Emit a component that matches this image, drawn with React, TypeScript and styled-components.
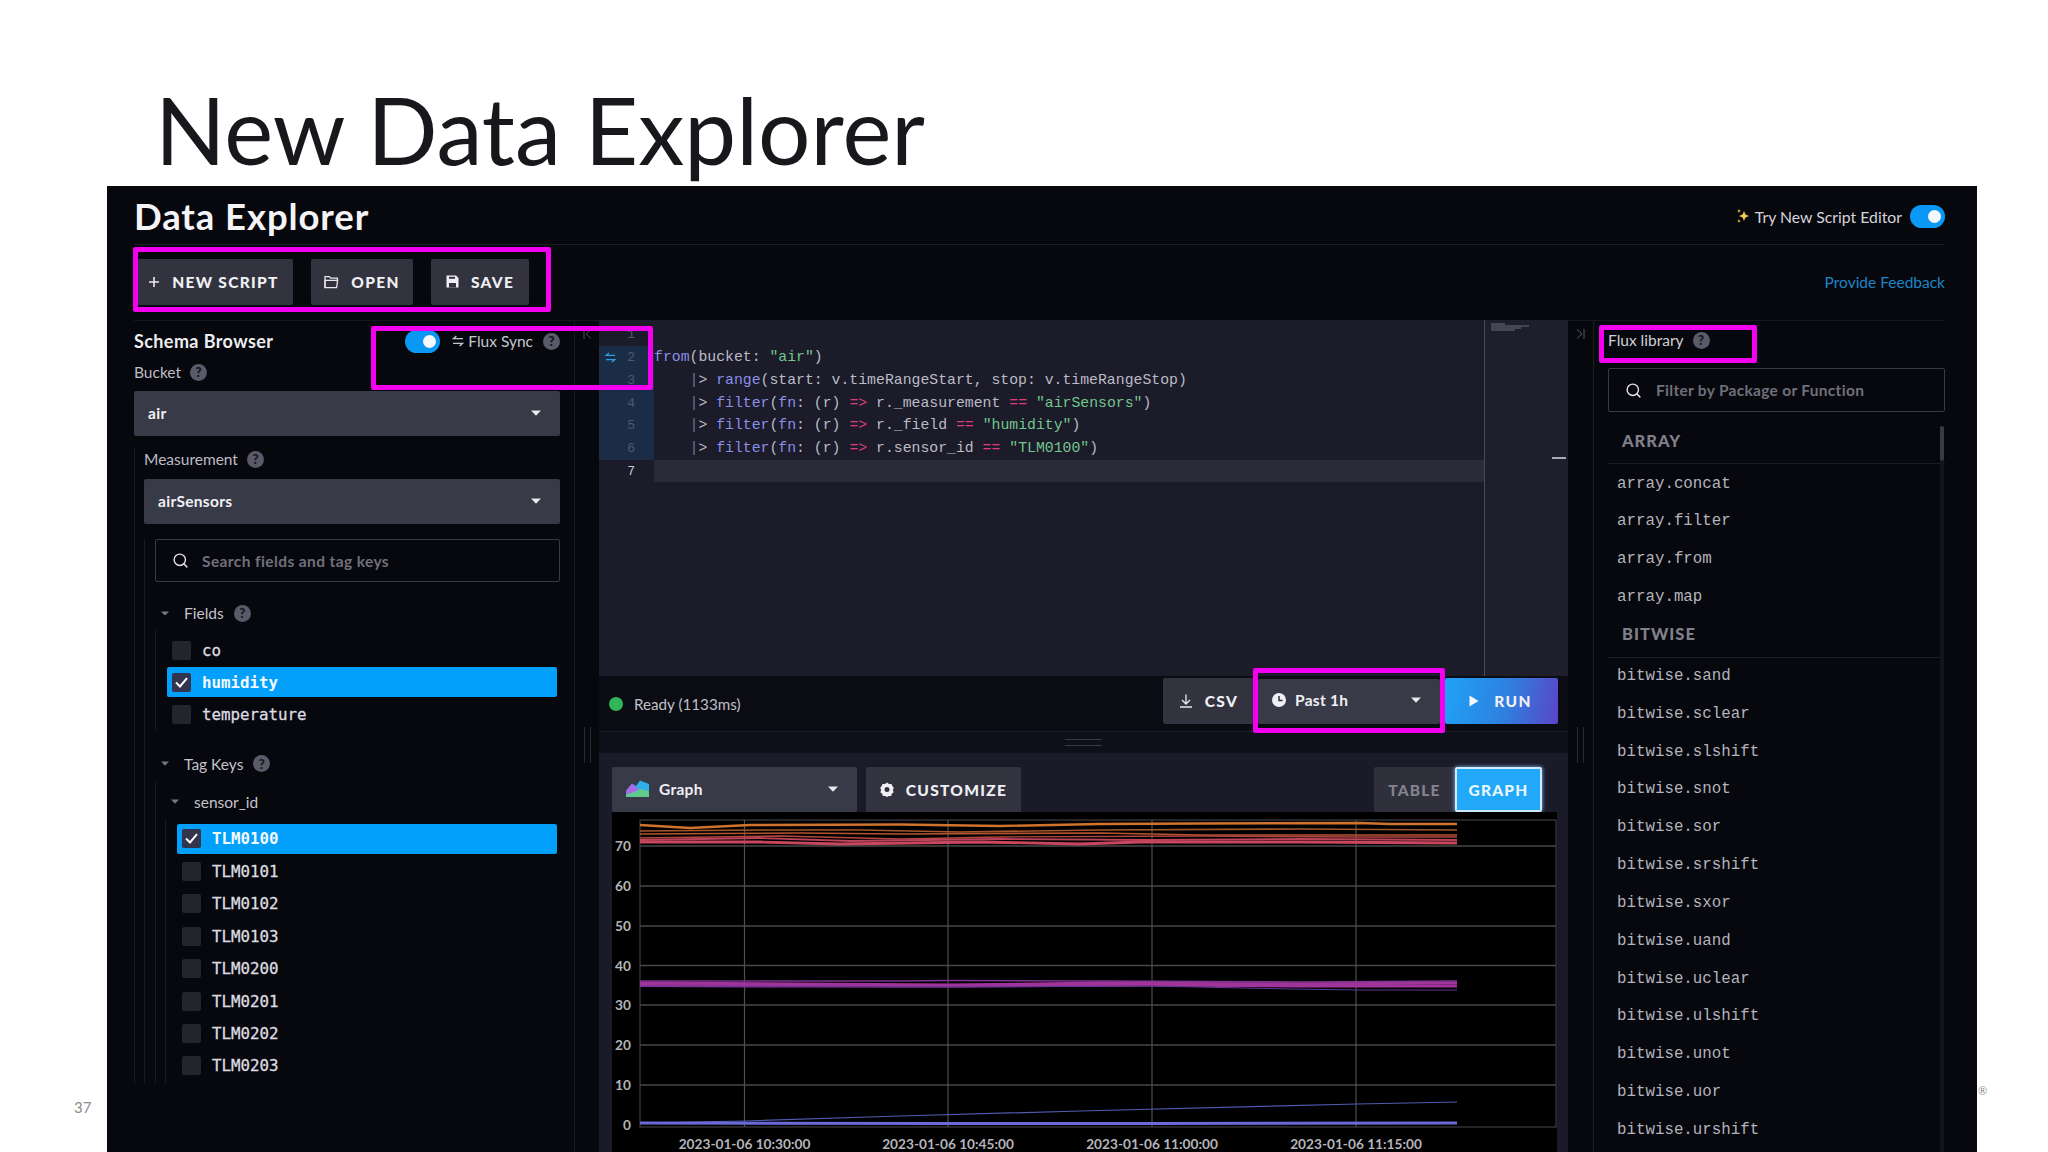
import styled, { createGlobalStyle } from "styled-components"
import { Search } from "lucide-react"

const GlobalStyle = createGlobalStyle`
  html, body {
    margin: 0;
    background: #fff;
  }
  * {
    box-sizing: border-box;
  }
`

const UI = `Lato, "Open Sans", sans-serif`
const MONO = `"Liberation Mono", monospace`
const TREE_MONO = `"DejaVu Sans Mono", monospace`

const Page = styled.div`
  width: 2048px;
  height: 1152px;
  overflow: hidden;
  background: #fff;
  font-family: ${UI};
  display: flex;
  flex-direction: column;
`

const SlideTitle = styled.h1`
  margin: 0;
  height: 186px;
  padding: 72px 0 0 155px;
  font-size: 92.6px;
  line-height: 116px;
  font-weight: 400;
  color: #17171c;
  white-space: nowrap;
`

const SlideBody = styled.div`
  flex: 1;
  display: flex;
  min-height: 0;
`

const SideMargin = styled.div<{ $w: number; $pad: number; $bottom: number; $size: number }>`
  width: ${(p) => p.$w}px;
  display: flex;
  align-items: flex-end;
  padding: 0 0 ${(p) => p.$bottom}px ${(p) => p.$pad}px;
  color: #8b8b8b;
  font-size: ${(p) => p.$size}px;
`

const App = styled.div`
  position: relative;
  width: 1870px;
  background: #07070e;
  padding: 0 32px 0 27px;
  display: flex;
  flex-direction: column;
  overflow: hidden;
`

const Highlight = styled.div<{ $x: number; $y: number; $r: number; $b: number }>`
  position: absolute;
  left: ${(p) => p.$x - 107}px;
  top: ${(p) => p.$y - 186}px;
  width: ${(p) => p.$r - p.$x}px;
  height: ${(p) => p.$b - p.$y}px;
  border: 5px solid #f400f0;
  border-radius: 2px;
  z-index: 3;
`

const Header = styled.header`
  height: 59px;
  flex: none;
  display: flex;
  align-items: center;
  justify-content: space-between;
  padding-top: 2px;
  border-bottom: 1px solid #1c1c24;
`

const AppTitle = styled.div`
  color: #f4f4f6;
  font-size: 36.5px;
  font-weight: 700;
  letter-spacing: 0.9px;
`

const TrySwitch = styled.div`
  display: flex;
  align-items: center;
  gap: 8px;
  color: #d4d4da;
  font-size: 15.8px;
`

const SparkleSlot = styled.span`
  display: flex;
  margin-right: -3px;
`

const Toggle = styled.span`
  position: relative;
  width: 35px;
  height: 23px;
  border-radius: 12px;
  background: #0b98f5;
  &::after {
    content: "";
    position: absolute;
    right: 4px;
    top: 5px;
    width: 13px;
    height: 13px;
    border-radius: 50%;
    background: #f4f7fb;
  }
`

const Toolbar = styled.div`
  height: 76px;
  flex: none;
  display: flex;
  align-items: flex-start;
  justify-content: space-between;
  padding-top: 14px;
  border-bottom: 1px solid #16161e;
`

const ToolGroup = styled.div`
  display: flex;
  gap: 18px;
`

const ActionButton = styled.button<{ $w: number }>`
  width: ${(p) => p.$w}px;
  height: 46px;
  border: none;
  border-radius: 2px;
  background: #32333f;
  color: #f0f0f4;
  font-family: ${UI};
  font-size: 15.5px;
  font-weight: 900;
  letter-spacing: 1.3px;
  text-transform: uppercase;
  display: flex;
  align-items: center;
  justify-content: center;
  gap: 12px;
  padding-bottom: 2px;
  white-space: nowrap;
`

const Feedback = styled.a`
  color: #1d86c6;
  font-size: 15.5px;
  padding-top: 14px;
`

const Main = styled.div`
  flex: 1;
  min-height: 0;
  display: grid;
  grid-template-columns: 441px 24px 969px 25px 352px;
`

const LeftPanel = styled.aside`
  border-right: 1px solid #191921;
  padding: 7px 14px 0 0;
`

const PanelHead = styled.div`
  height: 26px;
  display: flex;
  align-items: center;
  justify-content: space-between;
`

const PanelTitle = styled.div`
  color: #ecedf0;
  font-size: 18px;
  font-weight: 700;
  letter-spacing: 0.4px;
`

const FluxSync = styled.div`
  display: flex;
  align-items: center;
  gap: 10px;
  color: #c6c6cd;
  font-size: 15.5px;
`

const SyncLabel = styled.span`
  display: flex;
  align-items: center;
  gap: 4px;
  margin-left: 2px;
`

const FieldLabel = styled.div<{ $above?: number; $below: number }>`
  height: 24px;
  margin: ${(p) => p.$above ?? 0}px 0 ${(p) => p.$below}px;
  display: flex;
  align-items: center;
  gap: 9px;
  color: #bdbdc5;
  font-size: 15.5px;
`

const Help = styled.span`
  width: 17px;
  height: 17px;
  border-radius: 50%;
  background: #5a5a68;
  color: #15151c;
  font-size: 13px;
  font-weight: 900;
  display: inline-flex;
  align-items: center;
  justify-content: center;
  flex: none;
`

const Select = styled.div<{ $w?: number }>`
  height: 45px;
  width: ${(p) => (p.$w ? `${p.$w}px` : "auto")};
  flex: none;
  background: #393a47;
  border-radius: 2px;
  padding: 0 19px 2px 14px;
  color: #f0f0f4;
  font-size: 15.5px;
  font-weight: 700;
  letter-spacing: 0.3px;
  display: flex;
  align-items: center;
  justify-content: space-between;
`

const SelectLead = styled.span`
  display: flex;
  align-items: center;
  gap: 9px;
`

const Nest = styled.div<{ $pad: number; $above: number; $top?: number; $bottom?: number }>`
  border-left: 1px solid #191920;
  margin-top: ${(p) => p.$above}px;
  padding: ${(p) => p.$top ?? 0}px 0 ${(p) => p.$bottom ?? 0}px ${(p) => p.$pad}px;
`

const SearchBox = styled.div`
  height: 43px;
  border: 1px solid #3a3a44;
  border-radius: 2px;
  display: flex;
  align-items: center;
  gap: 13px;
  padding: 0 16px;
  color: #70707b;
  font-size: 15.5px;
  font-weight: 700;
  letter-spacing: 0.4px;
  svg {
    color: #e6e6ea;
    flex: none;
  }
`

const TreeHead = styled.div<{ $above?: number }>`
  height: 24px;
  margin-top: ${(p) => p.$above ?? 0}px;
  display: flex;
  align-items: center;
  color: #c4c4cb;
  font-size: 15.5px;
  gap: 10px;
`

const CaretSlot = styled.span`
  width: 20px;
  display: flex;
  justify-content: center;
  margin-right: -1px;
`

const Rows = styled.div`
  display: flex;
  flex-direction: column;
  gap: 2.45px;
  margin-right: 3px;
`

const TreeRow = styled.div<{ $on?: boolean }>`
  height: 30px;
  display: flex;
  align-items: center;
  gap: 11px;
  padding-left: 5px;
  border-radius: 2px;
  background: ${(p) => (p.$on ? "#03a0fb" : "transparent")};
  color: ${(p) => (p.$on ? "#f2f9ff" : "#dcdce0")};
  font-family: ${TREE_MONO};
  font-size: 15.8px;
  font-weight: ${(p) => (p.$on ? 700 : 400)};
  -webkit-text-stroke: ${(p) => (p.$on ? "0" : "0.3px")};
`

const Check = styled.span<{ $on?: boolean }>`
  width: 19px;
  height: 19px;
  border-radius: 2px;
  background: ${(p) => (p.$on ? "#33344e" : "#24242d")};
  display: flex;
  align-items: center;
  justify-content: center;
`

const HandleColumn = styled.div<{ $top: number }>`
  display: flex;
  flex-direction: column;
  align-items: center;
  padding-top: ${(p) => p.$top}px;
`

const CollapseIcon = styled.span<{ $mb: number }>`
  height: 14px;
  margin-bottom: ${(p) => p.$mb}px;
  display: flex;
`

const HandleBars = styled.span`
  width: 7px;
  height: 36px;
  border-left: 1px solid #2a2a34;
  border-right: 1px solid #2a2a34;
`

const Middle = styled.section`
  display: flex;
  flex-direction: column;
  min-width: 0;
  margin-top: -1px;
`

const Editor = styled.div`
  height: 356px;
  flex: none;
  display: flex;
  background: #1b1b2a;
  padding-top: 3.6px;
  position: relative;
`

const Gutter = styled.div`
  width: 55px;
  flex: none;
  display: flex;
  flex-direction: column;
`

const GutterLine = styled.div<{ $changed?: boolean; $current?: boolean }>`
  height: 22.7px;
  display: flex;
  align-items: center;
  justify-content: flex-end;
  gap: 11px;
  padding-right: 19px;
  font-family: ${MONO};
  font-size: 13px;
  background: ${(p) => (p.$changed ? "#1a2c46" : "transparent")};
  color: ${(p) => (p.$current ? "#c8c8d0" : "#4c5a70")};
`

const Code = styled.div`
  flex: 1;
  display: flex;
  flex-direction: column;
  min-width: 0;
`

const CodeLine = styled.div<{ $pipe?: boolean; $current?: boolean }>`
  height: 22.7px;
  line-height: 22.7px;
  padding-left: ${(p) => (p.$pipe ? 35.5 : 0)}px;
  font-family: ${MONO};
  font-size: 14.8px;
  white-space: pre;
  color: #bcbcc6;
  background: ${(p) => (p.$current ? "#2a2a38" : "transparent")};
`

const Fn = styled.span`
  color: #8b8fe6;
`

const Str = styled.span`
  color: #72c78d;
`

const Op = styled.span`
  color: #dc3f78;
`

const Pipe = styled.span`
  color: #6f7590;
`

const Minimap = styled.div`
  width: 84px;
  flex: none;
  margin-top: -3.6px;
  background: #1e1e2d;
  border-left: 1px solid #494a58;
  position: relative;
`

const MiniCode = styled.svg`
  display: block;
  margin: 3px 0 0 6px;
`

const ScrollMark = styled.span`
  position: absolute;
  right: 2px;
  top: 137px;
  width: 14px;
  height: 2px;
  background: #a8a8b2;
`

const StatusBar = styled.div`
  height: 56px;
  flex: none;
  display: flex;
  align-items: center;
  justify-content: space-between;
  background: #0b0b14;
  border-bottom: 1px solid #1f1f29;
  padding: 0 10px 0 10px;
`

const Ready = styled.div`
  display: flex;
  align-items: center;
  gap: 11px;
  color: #c0c0c8;
  font-size: 15.2px;
`

const Dot = styled.span`
  width: 14px;
  height: 14px;
  border-radius: 50%;
  background: #30b557;
`

const StatusActions = styled.div`
  display: flex;
  align-items: center;
  gap: 4px;
  margin-top: -5px;
`

const RunButton = styled(ActionButton)`
  background: linear-gradient(100deg, #1ea3f4 0%, #2f7fe0 55%, #5a45c8 100%);
  margin-left: 1px;
  gap: 15px;
  padding-left: 4px;
`

const Strip = styled.div`
  height: 21px;
  flex: none;
  background: #0f0f19;
  display: flex;
  align-items: center;
  justify-content: center;
`

const StripHandle = styled.span`
  width: 37px;
  height: 7px;
  border-top: 1px solid #3a3a45;
  border-bottom: 1px solid #3a3a45;
`

const GraphPanel = styled.div`
  flex: 1;
  min-height: 0;
  background: #1a1a29;
  padding: 14px 11px 0 13px;
  display: flex;
  flex-direction: column;
`

const GraphBar = styled.div`
  height: 45px;
  flex: none;
  display: flex;
  gap: 9px;
  padding-right: 15px;
`

const Spacer = styled.div`
  flex: 1;
`

const Segments = styled.div`
  display: flex;
`

const Segment = styled.div<{ $on?: boolean }>`
  height: 45px;
  display: flex;
  align-items: center;
  justify-content: center;
  width: ${(p) => (p.$on ? 87 : 81)}px;
  font-size: 15.5px;
  font-weight: 900;
  letter-spacing: 1.2px;
  border-radius: 2px;
  background: ${(p) => (p.$on ? "#22a8f8" : "#2f303c")};
  color: ${(p) => (p.$on ? "#e8f6ff" : "#83838e")};
  border: ${(p) => (p.$on ? "2px solid #cfeafd" : "none")};
  box-shadow: ${(p) => (p.$on ? "0 0 4px #7cc8f8" : "none")};
`

const ChartFrame = styled.div`
  flex: 1;
  min-height: 0;
  background: #000;
`

const ChartSvg = styled.svg`
  display: block;
`

const AxisText = styled.text`
  fill: #b4b4ba;
  font-family: ${UI};
  font-size: 13.7px;
  font-weight: 700;
`

const RightPanel = styled.aside`
  border-left: 1px solid #1d1d26;
  padding: 6px 0 0 14px;
  position: relative;
  overflow: hidden;
  &::before {
    content: "";
    position: absolute;
    right: 1px;
    top: 140px;
    bottom: 0;
    width: 4px;
    background: #14141c;
  }
  &::after {
    content: "";
    position: absolute;
    right: 1px;
    top: 105px;
    width: 4px;
    height: 35px;
    border-radius: 2px;
    background: #3a3a46;
  }
`

const LibraryHead = styled.div`
  height: 26px;
  margin-bottom: 15px;
  display: flex;
  align-items: center;
  gap: 9px;
  color: #d0d0d6;
  font-size: 15.5px;
`

const FilterBox = styled(SearchBox)`
  height: 44px;
  gap: 14px;
  letter-spacing: 0.3px;
`

const PackageHead = styled.div<{ $above?: number }>`
  height: 41px;
  margin-top: ${(p) => p.$above ?? 0}px;
  padding: 0 0 5px 14px;
  display: flex;
  align-items: center;
  border-bottom: 1px solid #1c1c25;
  color: #80808a;
  font-size: 16.5px;
  font-weight: 900;
  letter-spacing: 1px;
`

const PackageList = styled.div`
  margin-top: 1.5px;
`

const PackageItem = styled.div`
  height: 37.85px;
  line-height: 37.85px;
  padding-left: 9px;
  color: #b4b4bc;
  font-family: ${MONO};
  font-size: 15.8px;
`

const Caret = ({ size = 10, color = "#e8e8ec" }: { size?: number; color?: string }) => (
  <svg width={size} height={size * 0.6} viewBox="0 0 10 6">
    <path d="M0 0.5h10L5 5.8z" fill={color} />
  </svg>
)

const SyncIcon = ({ color, size = 12 }: { color: string; size?: number }) => (
  <svg width={size} height={size} viewBox="0 0 12 12" fill="none" stroke={color} strokeWidth="1.4">
    <path d="M11 3.6H1.4L4.4 1" />
    <path d="M1 8.4h9.6L7.6 11" />
  </svg>
)

const Checkmark = () => (
  <svg width="13" height="11" viewBox="0 0 13 11" fill="none" stroke="#fff" strokeWidth="2">
    <path d="M1 5.5l4 4L12 1.2" />
  </svg>
)

const Sparkle = () => (
  <svg width="14" height="16" viewBox="0 0 14 16">
    <path d="M8 3l1.4 3.6L13 8l-3.6 1.4L8 13 6.6 9.4 3 8l3.6-1.4z" fill="#f1cf55" />
    <path d="M3 1l.6 1.4L5 3l-1.4.6L3 5l-.6-1.4L1 3l1.4-.6z" fill="#f1cf55" />
    <path d="M3 11l.5 1.5L5 13l-1.5.5L3 15l-.5-1.5L1 13l1.5-.5z" fill="#f1cf55" />
  </svg>
)

const PlusIcon = () => (
  <svg width="12" height="12" viewBox="0 0 12 12" stroke="#e8e8ec" strokeWidth="1.6">
    <path d="M6 1v10M1 6h10" />
  </svg>
)

const FolderIcon = () => (
  <svg width="15" height="14" viewBox="0 0 15 14" fill="none" stroke="#e8e8ec" strokeWidth="1.3">
    <path d="M1 12.6V1.6h4.4l1.4 1.6h6.6v2.2" />
    <path d="M1 12.6h11.6l1-7.2H1z" />
  </svg>
)

const SaveIcon = () => (
  <svg width="13" height="13" viewBox="0 0 13 13">
    <path d="M0.5 0.5h9.5l2.5 2.5v9.5h-12z" fill="#f0f0f4" />
    <rect x="3" y="8" width="7" height="4.5" fill="#32333f" />
    <rect x="3" y="1.8" width="6" height="2" fill="#32333f" />
  </svg>
)

const DownloadIcon = () => (
  <svg width="14" height="14" viewBox="0 0 14 14" fill="none" stroke="#e8e8ec" strokeWidth="1.3">
    <path d="M7 0.5v9M3 6l4 4 4-4M1 13h12" />
  </svg>
)

const ClockIcon = () => (
  <svg width="14" height="14" viewBox="0 0 14 14">
    <circle cx="7" cy="7" r="7" fill="#f0f0f4" />
    <path d="M7 3v4.4h3.6" fill="none" stroke="#32333f" strokeWidth="1.5" />
  </svg>
)

const PlayIcon = () => (
  <svg width="10" height="12" viewBox="0 0 10 12">
    <path d="M0.5 0.5L9.5 6L0.5 11.5z" fill="#f4f8ff" />
  </svg>
)

const GearIcon = () => (
  <svg width="14" height="15" viewBox="0 0 14 15">
    <path
      fillRule="evenodd"
      d="M7 0.5l2 1.6 2.4-.2 1 2.2 1.4 1.9L12.8 8l.9 2.2-1.9 1.5-.6 2.4H8.8L7 14.9l-1.8-.8H2.8l-.6-2.4L.3 10.2 1.2 8 .2 6l1.4-1.9 1-2.2 2.4.2zM7 5a2.5 2.5 0 100 5 2.5 2.5 0 000-5z"
      fill="#f0f0f4"
    />
  </svg>
)

const GraphIcon = () => (
  <svg width="24" height="17" viewBox="0 0 24 17">
    <path d="M0 16V11L6 3.5L10 6L14 .5L23 4V14z" fill="#2fb0e6" />
    <path d="M0 14V11L6 3.5L11 8L15 13z" fill="#a86ae6" />
    <path d="M0 17V14.5L8 12L14 9L23 11V17z" fill="#62c98d" />
  </svg>
)

const CollapseLeft = () => (
  <svg width="9" height="10" viewBox="0 0 9 10" fill="none" stroke="#4a4a55" strokeWidth="1">
    <path d="M1 0v10M8 0.5L3 5l5 4.5" />
  </svg>
)

const CollapseRight = () => (
  <svg width="9" height="10" viewBox="0 0 9 10" fill="none" stroke="#5a5a66" strokeWidth="1">
    <path d="M8 0v10M1 0.5L6 5l-5 4.5" />
  </svg>
)

const HelpMark = () => <Help>?</Help>

const fields = ["co", "humidity", "temperature"]
const sensors = ["TLM0100", "TLM0101", "TLM0102", "TLM0103", "TLM0200", "TLM0201", "TLM0202", "TLM0203"]
const arrayFns = ["array.concat", "array.filter", "array.from", "array.map"]
const bitwiseFns = [
  "bitwise.sand",
  "bitwise.sclear",
  "bitwise.slshift",
  "bitwise.snot",
  "bitwise.sor",
  "bitwise.srshift",
  "bitwise.sxor",
  "bitwise.uand",
  "bitwise.uclear",
  "bitwise.ulshift",
  "bitwise.unot",
  "bitwise.uor",
  "bitwise.urshift",
]

const gridYs = [846, 886, 926, 965.5, 1005, 1045, 1085]
const yLabels = [
  { y: 846, t: "70" },
  { y: 886, t: "60" },
  { y: 926, t: "50" },
  { y: 965.5, t: "40" },
  { y: 1005, t: "30" },
  { y: 1045, t: "20" },
  { y: 1085, t: "10" },
  { y: 1125, t: "0" },
]
const xTicks = [
  { x: 744.5, t: "2023-01-06 10:30:00" },
  { x: 948, t: "2023-01-06 10:45:00" },
  { x: 1152, t: "2023-01-06 11:00:00" },
  { x: 1356, t: "2023-01-06 11:15:00" },
]

const series = [
  { c: "#d0742d", w: 2.4, p: "640,825 690,828 750,825 900,824.5 1000,826 1100,824 1200,823.5 1360,823 1390,824 1457,824" },
  { c: "#a4562b", w: 1.6, p: "640,831 760,830 860,830 960,832 1100,830 1300,829 1457,830" },
  { c: "#b5532f", w: 1.6, p: "640,834 800,833 900,834 1100,833 1200,835 1457,835" },
  { c: "#b24640", w: 1.4, p: "640,838 780,836 900,839 1000,837 1200,836 1360,837 1457,837" },
  { c: "#bb435a", w: 1.8, p: "640,840 760,838 850,841 1000,839 1150,840 1300,839 1457,840" },
  { c: "#c8475f", w: 2.8, p: "640,842 760,842 840,844 980,842 1080,844 1140,842 1300,842 1457,843" },
  { c: "#7a3690", w: 1.6, p: "640,981 900,981 950,980.5 1100,981 1300,982 1457,981" },
  { c: "#a1349a", w: 2.8, p: "640,983 800,984 950,985 1100,983 1300,984 1457,983" },
  { c: "#a1349a", w: 3, p: "640,985.5 760,986 960,986 1150,985 1300,986 1457,986" },
  { c: "#5f3596", w: 1, p: "640,986 950,987 1150,986 1290,989 1360,990 1457,990" },
  { c: "#4f5aae", w: 1.2, p: "640,1123 745,1121 900,1116 1080,1111 1357,1104 1457,1102" },
  { c: "#6a6ad8", w: 3, p: "640,1123 950,1123.5 1150,1123.5 1457,1123" },
]

function Chart() {
  return (
    <ChartSvg width="945" height="340" viewBox="612 812 945 340">
      <rect x="640" y="820" width="916" height="307" fill="none" stroke="#3e3e42" strokeWidth="1.2" />
      {gridYs.map((y) => (
        <line key={y} x1="640" x2="1556" y1={y} y2={y} stroke="#47474b" strokeWidth="1.3" />
      ))}
      {xTicks.map((tick) => (
        <line key={tick.x} x1={tick.x} x2={tick.x} y1="820" y2="1127" stroke="#4f4f54" strokeWidth="1.2" />
      ))}
      {series.map((s, i) => (
        <polyline key={i} points={s.p} fill="none" stroke={s.c} strokeWidth={s.w} />
      ))}
      {yLabels.map((l) => (
        <AxisText key={l.t} x="631" y={l.y + 5} textAnchor="end">
          {l.t}
        </AxisText>
      ))}
      {xTicks.map((tick) => (
        <AxisText key={tick.t} x={tick.x} y="1149" textAnchor="middle">
          {tick.t}
        </AxisText>
      ))}
    </ChartSvg>
  )
}

function FilterCall({ left, value }: { left: string; value: string }) {
  return (
    <CodeLine $pipe>
      <Pipe>|</Pipe>{"> "}
      <Fn>filter</Fn>(<Fn>fn</Fn>: (r) <Op>=&gt;</Op> {left} <Op>==</Op> <Str>"{value}"</Str>)
    </CodeLine>
  )
}

export default function DataExplorerSlide() {
  return (
    <Page>
      <GlobalStyle />
      <SlideTitle>New Data Explorer</SlideTitle>
      <SlideBody>
        <SideMargin $w={107} $pad={74} $bottom={36} $size={15}>37</SideMargin>
        <App>
          <Header>
            <AppTitle>Data Explorer</AppTitle>
            <TrySwitch>
              <SparkleSlot>
                <Sparkle />
              </SparkleSlot>
              Try New Script Editor
              <Toggle />
            </TrySwitch>
          </Header>

          <Toolbar>
            <ToolGroup>
              <ActionButton $w={159}>
                <PlusIcon />
                New Script
              </ActionButton>
              <ActionButton $w={102}>
                <FolderIcon />
                Open
              </ActionButton>
              <ActionButton $w={98}>
                <SaveIcon />
                Save
              </ActionButton>
            </ToolGroup>
            <Feedback>Provide Feedback</Feedback>
          </Toolbar>

          <Main>
            <LeftPanel>
              <PanelHead>
                <PanelTitle>Schema Browser</PanelTitle>
                <FluxSync>
                  <Toggle />
                  <SyncLabel>
                    <SyncIcon color="#c6c6cd" />
                    Flux Sync
                  </SyncLabel>
                  <HelpMark />
                </FluxSync>
              </PanelHead>
              <FieldLabel $above={6} $below={7}>
                Bucket <HelpMark />
              </FieldLabel>
              <Select>
                air
                <Caret />
              </Select>
              <Nest $pad={9} $above={11}>
                <FieldLabel $below={8}>
                  Measurement <HelpMark />
                </FieldLabel>
                <Select>
                  airSensors
                  <Caret />
                </Select>
                <Nest $pad={10} $above={15}>
                  <SearchBox>
                    <Search size={17} strokeWidth={2} />
                    Search fields and tag keys
                  </SearchBox>
                  <TreeHead $above={19}>
                    <CaretSlot>
                      <Caret size={8} color="#77777f" />
                    </CaretSlot>
                    Fields <HelpMark />
                  </TreeHead>
                  <Nest $pad={11} $above={5} $top={5}>
                    <Rows>
                      {fields.map((f) => (
                        <TreeRow key={f} $on={f === "humidity"}>
                          <Check $on={f === "humidity"}>{f === "humidity" && <Checkmark />}</Check>
                          {f}
                        </TreeRow>
                      ))}
                    </Rows>
                  </Nest>
                  <TreeHead $above={22}>
                    <CaretSlot>
                      <Caret size={8} color="#77777f" />
                    </CaretSlot>
                    Tag Keys <HelpMark />
                  </TreeHead>
                  <Nest $pad={9} $above={5} $top={9}>
                    <TreeHead>
                      <CaretSlot>
                        <Caret size={8} color="#77777f" />
                      </CaretSlot>
                      sensor_id
                    </TreeHead>
                    <Nest $pad={11} $above={5} $top={5} $bottom={3}>
                      <Rows>
                        {sensors.map((s) => (
                          <TreeRow key={s} $on={s === "TLM0100"}>
                            <Check $on={s === "TLM0100"}>{s === "TLM0100" && <Checkmark />}</Check>
                            {s}
                          </TreeRow>
                        ))}
                      </Rows>
                    </Nest>
                  </Nest>
                </Nest>
              </Nest>
            </LeftPanel>

            <HandleColumn $top={8}>
              <CollapseIcon $mb={384}>
                <CollapseLeft />
              </CollapseIcon>
              <HandleBars />
            </HandleColumn>

            <Middle>
              <Editor>
                <Gutter>
                  <GutterLine>1</GutterLine>
                  <GutterLine $changed>
                    <SyncIcon color="#2f9ee8" size={11} />2
                  </GutterLine>
                  <GutterLine $changed>3</GutterLine>
                  <GutterLine $changed>4</GutterLine>
                  <GutterLine $changed>5</GutterLine>
                  <GutterLine $changed>6</GutterLine>
                  <GutterLine $current>7</GutterLine>
                </Gutter>
                <Code>
                  <CodeLine />
                  <CodeLine>
                    <Fn>from</Fn>(bucket: <Str>"air"</Str>)
                  </CodeLine>
                  <CodeLine $pipe>
                    <Pipe>|</Pipe>{"> "}
                    <Fn>range</Fn>(start: v.timeRangeStart, stop: v.timeRangeStop)
                  </CodeLine>
                  <FilterCall left="r._measurement" value="airSensors" />
                  <FilterCall left="r._field" value="humidity" />
                  <FilterCall left="r.sensor_id" value="TLM0100" />
                  <CodeLine $current />
                </Code>
                <Minimap>
                  <MiniCode width="42" height="9" viewBox="0 0 42 9">
                    <path d="M0 1h14M0 3h38M0 5h30M0 7h24" stroke="#6c6c78" strokeWidth="1" />
                  </MiniCode>
                  <ScrollMark />
                </Minimap>
              </Editor>

              <StatusBar>
                <Ready>
                  <Dot />
                  Ready (1133ms)
                </Ready>
                <StatusActions>
                  <ActionButton $w={91}>
                    <DownloadIcon />
                    CSV
                  </ActionButton>
                  <Select $w={182}>
                    <SelectLead>
                      <ClockIcon />
                      Past 1h
                    </SelectLead>
                    <Caret />
                  </Select>
                  <RunButton $w={113}>
                    <PlayIcon />
                    Run
                  </RunButton>
                </StatusActions>
              </StatusBar>

              <Strip>
                <StripHandle />
              </Strip>

              <GraphPanel>
                <GraphBar>
                  <Select $w={245}>
                    <SelectLead>
                      <GraphIcon />
                      Graph
                    </SelectLead>
                    <Caret />
                  </Select>
                  <ActionButton $w={155}>
                    <GearIcon />
                    Customize
                  </ActionButton>
                  <Spacer />
                  <Segments>
                    <Segment>TABLE</Segment>
                    <Segment $on>GRAPH</Segment>
                  </Segments>
                </GraphBar>
                <ChartFrame>
                  <Chart />
                </ChartFrame>
              </GraphPanel>
            </Middle>

            <HandleColumn $top={8}>
              <CollapseIcon $mb={384}>
                <CollapseRight />
              </CollapseIcon>
              <HandleBars />
            </HandleColumn>

            <RightPanel>
              <LibraryHead>
                Flux library <HelpMark />
              </LibraryHead>
              <FilterBox>
                <Search size={17} strokeWidth={2} />
                Filter by Package or Function
              </FilterBox>
              <PackageHead $above={11}>ARRAY</PackageHead>
              <PackageList>
                {arrayFns.map((fn) => (
                  <PackageItem key={fn}>{fn}</PackageItem>
                ))}
                <PackageHead>BITWISE</PackageHead>
                {bitwiseFns.map((fn) => (
                  <PackageItem key={fn}>{fn}</PackageItem>
                ))}
              </PackageList>
            </RightPanel>
          </Main>

          <Highlight $x={133} $y={247} $r={551} $b={312} />
          <Highlight $x={371} $y={326} $r={653} $b={390} />
          <Highlight $x={1253} $y={668} $r={1445} $b={733} />
          <Highlight $x={1599} $y={325} $r={1757} $b={363} />
        </App>
        <SideMargin $w={71} $pad={1} $bottom={55} $size={11}>®</SideMargin>
      </SlideBody>
    </Page>
  )
}
